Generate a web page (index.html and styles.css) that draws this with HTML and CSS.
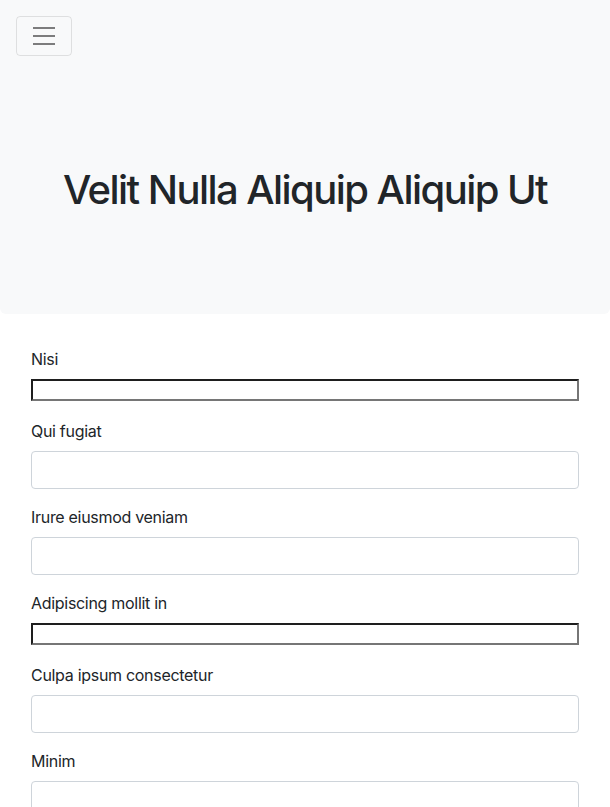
FILE: index.html
```html
<!DOCTYPE html>
<html>
<head>
<meta charset="utf-8">
<link rel="stylesheet" href="styles.css">
</head>
<body>
<header class="jumbotron">
  <nav class="navbar">
    <button class="toggler" type="button" aria-label="Toggle navigation">
      <svg width="30" height="30" viewBox="0 0 30 30"><path stroke="rgba(0,0,0,0.5)" stroke-linecap="butt" stroke-miterlimit="10" stroke-width="2" d="M4 7h22M4 15h22M4 23h22"/></svg>
    </button>
  </nav>
  <h1 class="title">Velit Nulla Aliquip Aliquip Ut</h1>
</header>
<form class="form">
  <div class="group group-plain"><label>Nisi</label><input class="plain" type="text"></div>
  <div class="group"><label>Qui fugiat</label><input class="control" type="text"></div>
  <div class="group"><label>Irure eiusmod veniam</label><input class="control" type="text"></div>
  <div class="group group-plain"><label>Adipiscing mollit in</label><input class="plain" type="text"></div>
  <div class="group"><label>Culpa ipsum consectetur</label><input class="control" type="text"></div>
  <div class="group"><label>Minim</label><input class="control" type="text"></div>
</form>
</body>
</html>
```

FILE: styles.css
```css
* { box-sizing: border-box; }
html, body { margin: 0; padding: 0; }
body {
  font-family: Inter, "Liberation Sans", Arial, sans-serif;
  font-size: 16px;
  line-height: 1.5;
  color: #212529;
  background: #fff;
  overflow: hidden;
}
.jumbotron {
  background: #f8f9fa;
  border-radius: 0 0 6px 6px;
  height: 314px;
  padding: 16px;
  display: flex;
  flex-direction: column;
}
.navbar { display: flex; }
.toggler {
  width: 56px;
  height: 40px;
  padding: 4px 12px;
  border: 1px solid rgba(0,0,0,0.1);
  border-radius: 4px;
  background: transparent;
  display: flex;
  align-items: center;
  justify-content: center;
}
.toggler svg { display: block; }
.title {
  margin: 0;
  margin-top: 110px;
  text-align: center;
  font-size: 40px;
  font-weight: 500;
  line-height: 1.2;
  letter-spacing: -1.55px;
}
.form {
  padding: 33px 31px 0;
}
.group {
  display: flex;
  flex-direction: column;
  margin-bottom: 16px;
}
.group-plain { margin-bottom: 18px; }
.group label {
  margin-bottom: 8px;
  display: block;
  letter-spacing: -0.3px;
}
.plain {
  height: 22px;
  border-style: solid;
  border-width: 2px;
  border-color: #1e1e1e #767676 #767676 #1e1e1e;
  background: #fff;
  padding: 1px 2px;
}
.control {
  height: 38px;
  border: 1px solid #ced4da;
  border-radius: 4px;
  padding: 6px 12px;
  background: #fff;
}
```
